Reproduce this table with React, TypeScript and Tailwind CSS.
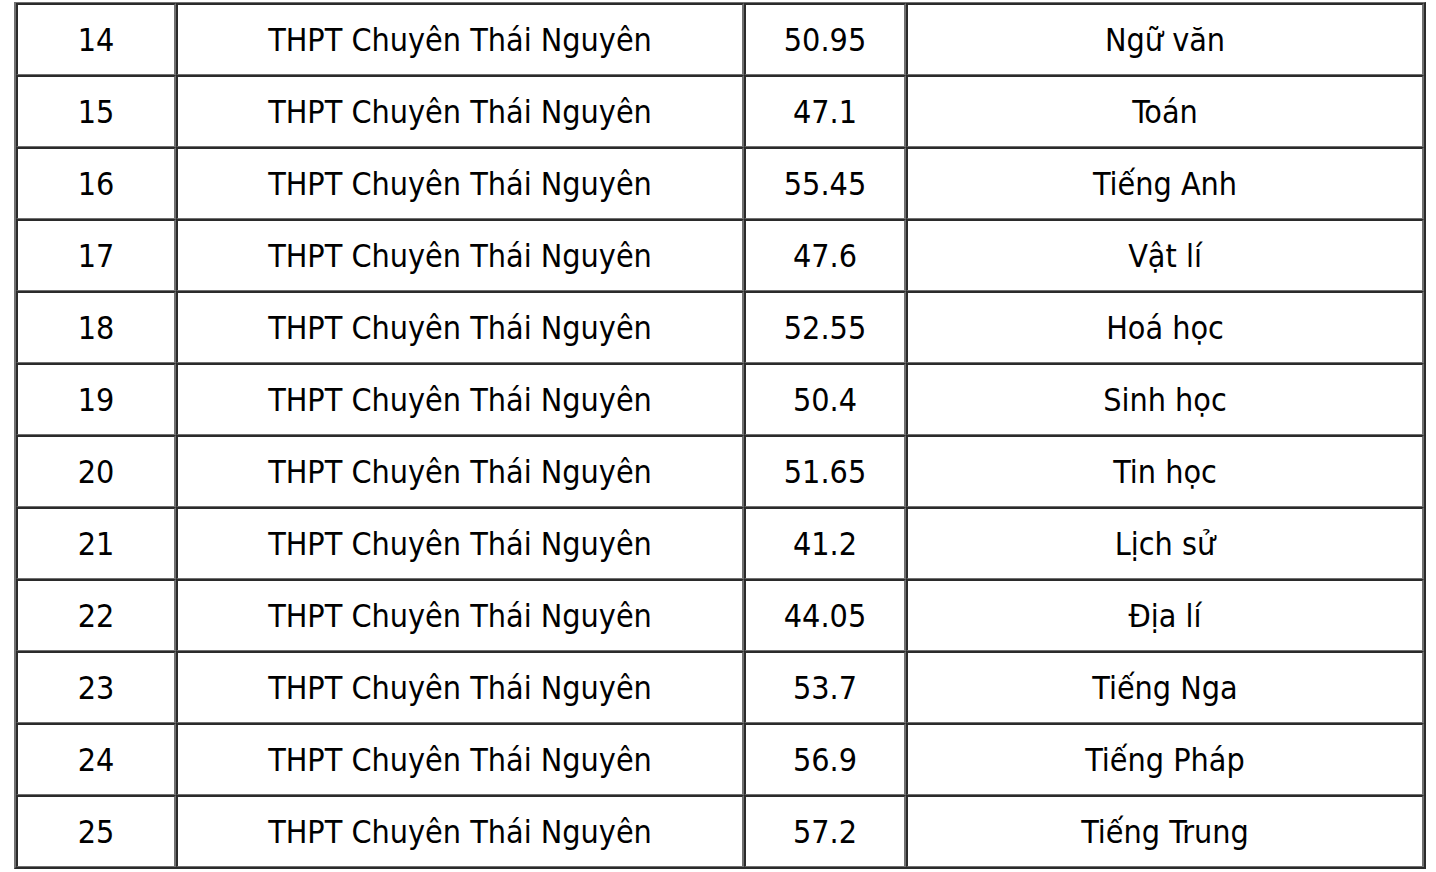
const ROWS = [
  { stt: 14, school: 'THPT Chuyên Thái Nguyên', score: '50.95', subject: 'Ngữ văn' },
  { stt: 15, school: 'THPT Chuyên Thái Nguyên', score: '47.1', subject: 'Toán' },
  { stt: 16, school: 'THPT Chuyên Thái Nguyên', score: '55.45', subject: 'Tiếng Anh' },
  { stt: 17, school: 'THPT Chuyên Thái Nguyên', score: '47.6', subject: 'Vật lí' },
  { stt: 18, school: 'THPT Chuyên Thái Nguyên', score: '52.55', subject: 'Hoá học' },
  { stt: 19, school: 'THPT Chuyên Thái Nguyên', score: '50.4', subject: 'Sinh học' },
  { stt: 20, school: 'THPT Chuyên Thái Nguyên', score: '51.65', subject: 'Tin học' },
  { stt: 21, school: 'THPT Chuyên Thái Nguyên', score: '41.2', subject: 'Lịch sử' },
  { stt: 22, school: 'THPT Chuyên Thái Nguyên', score: '44.05', subject: 'Địa lí' },
  { stt: 23, school: 'THPT Chuyên Thái Nguyên', score: '53.7', subject: 'Tiếng Nga' },
  { stt: 24, school: 'THPT Chuyên Thái Nguyên', score: '56.9', subject: 'Tiếng Pháp' },
  { stt: 25, school: 'THPT Chuyên Thái Nguyên', score: '57.2', subject: 'Tiếng Trung' },
]

// each cell: dark top/left, gray bottom/right
const cell =
  'flex items-center justify-center h-[72px] border-t-2 border-l-2 border-b border-r-2 border-t-[#2b2b2b] border-l-[#2b2b2b] border-b-[#707070] border-r-[#707070]'

export default function App() {
  return (
    <div className="min-h-screen bg-white pt-[2px] pl-[14px]">
      <div
        className="w-[1412px] border-t border-l-2 border-r-2 border-b-2 border-t-[#707070] border-l-[#707070] border-r-[#2b2b2b] border-b-[#2b2b2b] text-[32px] text-black"
        style={{ fontFamily: '"DejaVu Sans Condensed", "DejaVu Sans", sans-serif' }}
      >
        {ROWS.map((r) => (
          <div key={r.stt} className="flex">
            <div className={`${cell} w-[160px]`}>{r.stt}</div>
            <div className={`${cell} w-[568px]`}>{r.school}</div>
            <div className={`${cell} w-[162px]`}>{r.score}</div>
            <div className={`${cell} w-[518px]`}>{r.subject}</div>
          </div>
        ))}
      </div>
    </div>
  )
}
